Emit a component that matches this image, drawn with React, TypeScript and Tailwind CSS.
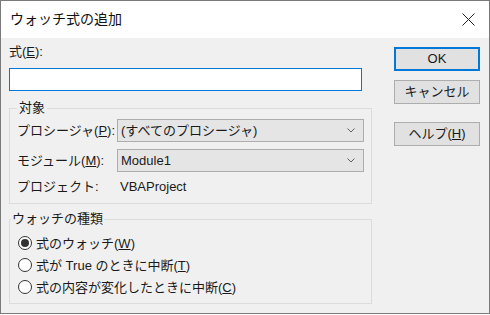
const font = "font-['Liberation_Sans','Noto_Sans_CJK_JP',sans-serif]";

function Chevron() {
  return (
    <svg width="8" height="5" viewBox="0 0 8 5" className="shrink-0">
      <polyline points="0.5,0.5 4,4 7.5,0.5" fill="none" stroke="#606060" strokeWidth="1" />
    </svg>
  );
}

function CloseIcon() {
  return (
    <svg width="13" height="13" viewBox="0 0 13 13">
      <path d="M0.5 0.5 L12.5 12.5 M12.5 0.5 L0.5 12.5" stroke="#222" strokeWidth="1" fill="none" />
    </svg>
  );
}

function Combo({ value }: { value: string }) {
  return (
    <div className="flex-1 h-[23px] bg-[#e5e5e5] border border-[#adadad] flex items-center justify-between pl-[3px] pr-[8px]">
      <span className="text-[13px] leading-[17px] text-[#1a1a1a]">{value}</span>
      <Chevron />
    </div>
  );
}

function Radio({ checked, children }: { checked?: boolean; children: React.ReactNode }) {
  return (
    <div className="h-[22px] flex items-center gap-[4px]">
      <div className="w-[14px] h-[14px] rounded-full border border-[#333] bg-white flex items-center justify-center">
        {checked && <div className="w-[8px] h-[8px] rounded-full bg-[#333]" />}
      </div>
      <span className="text-[13px] leading-[17px] text-[#1a1a1a]">{children}</span>
    </div>
  );
}

function Btn({ children, primary }: { children: React.ReactNode; primary?: boolean }) {
  return (
    <div
      className={
        primary
          ? 'w-[86px] h-[24px] bg-[#e1e1e1] border-2 border-[#0078d7] flex items-center justify-center text-[13px] text-[#1a1a1a]'
          : 'w-[86px] h-[24px] bg-[#e1e1e1] border border-[#adadad] flex items-center justify-center text-[13px] text-[#1a1a1a]'
      }
    >
      {children}
    </div>
  );
}

export default function App() {
  return (
    <div className={`w-[490px] h-[314px] border border-[#7a7a7a] bg-[#f0f0f0] flex flex-col ${font}`}>
      {/* title bar */}
      <div className="h-[37px] bg-white flex items-center justify-between pl-[9px] pr-[14px] shrink-0">
        <span className="text-[14px] text-[#111]">ウォッチ式の追加</span>
        <CloseIcon />
      </div>

      <div className="flex pl-[8px] pr-[9px] pt-[5px]">
        {/* left column */}
        <div className="w-[363px] flex flex-col">
          <div className="text-[13px] leading-[17px] text-[#1a1a1a]">
            式(<span className="underline">E</span>):
          </div>
          <div className="mt-[8px] w-[353px] h-[23px] bg-white border border-[#0078d7]" />

          <fieldset className="mt-[9px] border border-[#dcdcdc] px-[7px] pb-[8px]">
            <legend className="px-[2px] text-[13px] leading-[16px] text-[#1a1a1a]">対象</legend>
            <div className="pt-[3px] flex flex-col">
              <div className="flex items-center">
                <span className="w-[100px] text-[13px] leading-[17px] text-[#1a1a1a]">
                  プロシージャ(<span className="underline">P</span>):
                </span>
                <Combo value="(すべてのプロシージャ)" />
              </div>
              <div className="flex items-center mt-[7px]">
                <span className="w-[100px] text-[13px] leading-[17px] text-[#1a1a1a]">
                  モジュール(<span className="underline">M</span>):
                </span>
                <Combo value="Module1" />
              </div>
              <div className="flex items-center mt-[6px] text-[13px] leading-[17px] text-[#1a1a1a]">
                <span className="w-[103px]">プロジェクト:</span>
                <span>VBAProject</span>
              </div>
            </div>
          </fieldset>

          <fieldset className="mt-[7px] border border-[#dcdcdc] pl-[1px] pb-[5px]">
            <legend className="px-[1px] text-[13px] leading-[16px] text-[#1a1a1a]">ウォッチの種類</legend>
            <div className="pt-[5px] pl-[7px] flex flex-col">
              <Radio checked>
                式のウォッチ(<span className="underline">W</span>)
              </Radio>
              <Radio>
                式が True のときに中断(<span className="underline">T</span>)
              </Radio>
              <Radio>
                式の内容が変化したときに中断(<span className="underline">C</span>)
              </Radio>
            </div>
          </fieldset>
        </div>

        {/* right column */}
        <div className="ml-[22px] pt-[4px] flex flex-col">
          <Btn primary>OK</Btn>
          <div className="mt-[9px]">
            <Btn>キャンセル</Btn>
          </div>
          <div className="mt-[18px]">
            <Btn>
              ヘルプ(<span className="underline">H</span>)
            </Btn>
          </div>
        </div>
      </div>
    </div>
  );
}
